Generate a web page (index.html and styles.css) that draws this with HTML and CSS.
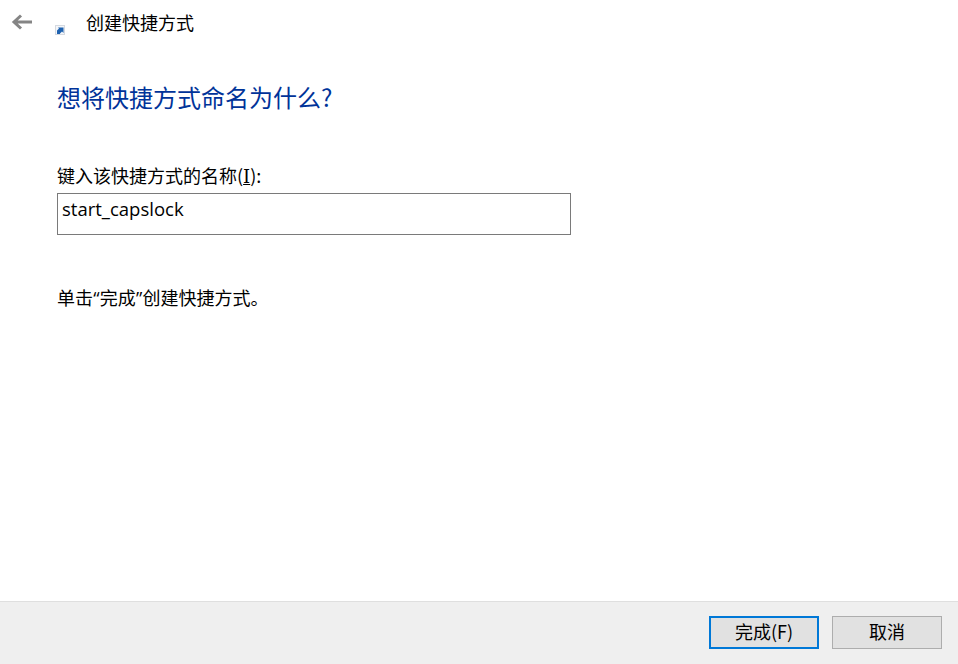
FILE: index.html
```
<!DOCTYPE html>
<html lang="zh-CN">
<head>
<meta charset="utf-8">
<title>创建快捷方式</title>
<link rel="stylesheet" href="styles.css">
</head>
<body>
<div class="window">
  <header class="titlebar">
    <svg class="back" width="22" height="16" viewBox="0 0 22 16"><path d="M10 1.5 3 8l7 6.5M3 8h18" fill="none" stroke="#858585" stroke-width="3"/></svg>
    <svg class="shortcut" width="10" height="10" viewBox="0 0 10 10"><rect width="10" height="10" fill="#d5d9e0"/><rect x="1" y="1" width="8" height="8" fill="#f4f6f9"/><path d="M2 9V5.5L4 3.5 3 2.5H8.5V8L7 6.5 5 8.5V9z" fill="#1f62b0"/></svg>
    <span class="title">创建快捷方式</span>
  </header>
  <main class="content">
    <h1 class="heading">想将快捷方式命名为什么?</h1>
    <label class="label" for="name">键入该快捷方式的名称(<u class="key">I</u>):</label>
    <input class="name" id="name" type="text" value="start_capslock">
    <p class="hint">单击<span class="quote">“</span>完成<span class="quote">”</span>创建快捷方式。</p>
  </main>
  <footer class="footer">
    <button class="btn primary">完成(F)</button>
    <button class="btn">取消</button>
  </footer>
</div>
</body>
</html>
```
FILE: styles.css
```
* { box-sizing: border-box; }
html, body { margin: 0; height: 100%; }
body { background: #fff; color: #000; font-family: "Noto Sans CJK SC", "Noto Sans", sans-serif; }
.window { width: 958px; height: 664px; display: flex; flex-direction: column; overflow: hidden; }
.titlebar { height: 48px; flex: none; display: flex; align-items: flex-start; }
.back { margin: 14px 0 0 11px; }
.shortcut { margin: 25px 0 0 22px; }
.title { margin: 9px 0 0 21px; font-size: 18px; line-height: 26px; }
.content { flex: 1; padding: 0 0 0 57px; }
.heading { margin: 32px 0 0; font-size: 24px; line-height: 34px; font-weight: 400; color: #003399; }
.label { display: block; margin-top: 48px; font-size: 18px; line-height: 26px; }
.key { font-family: "DejaVu Serif", serif; font-size: 18px; line-height: 1; }
.quote { font-family: "Open Sans", sans-serif; padding: 0 0.25px; }
.name { display: block; width: 514px; height: 42px; margin-top: 5px; padding: 0 4px 11px; border: 1px solid #7a7a7a; background: #fff; font-family: "Open Sans", "Noto Sans", sans-serif; font-size: 18.5px; color: #000; outline: none; }
.hint { margin: 49px 0 0; font-size: 18px; line-height: 26px; }
.footer { height: 63px; flex: none; display: flex; justify-content: flex-end; gap: 13px; padding: 14px 16px 0 0; background: #efefef; border-top: 1px solid #dfdfdf; }
.btn { width: 110px; height: 33px; padding: 0 0 3px; background: #e1e1e1; border: 1px solid #adadad; font-family: inherit; font-size: 18px; line-height: 1; color: #000; }
.primary { border: 2px solid #0078d7; }
```
